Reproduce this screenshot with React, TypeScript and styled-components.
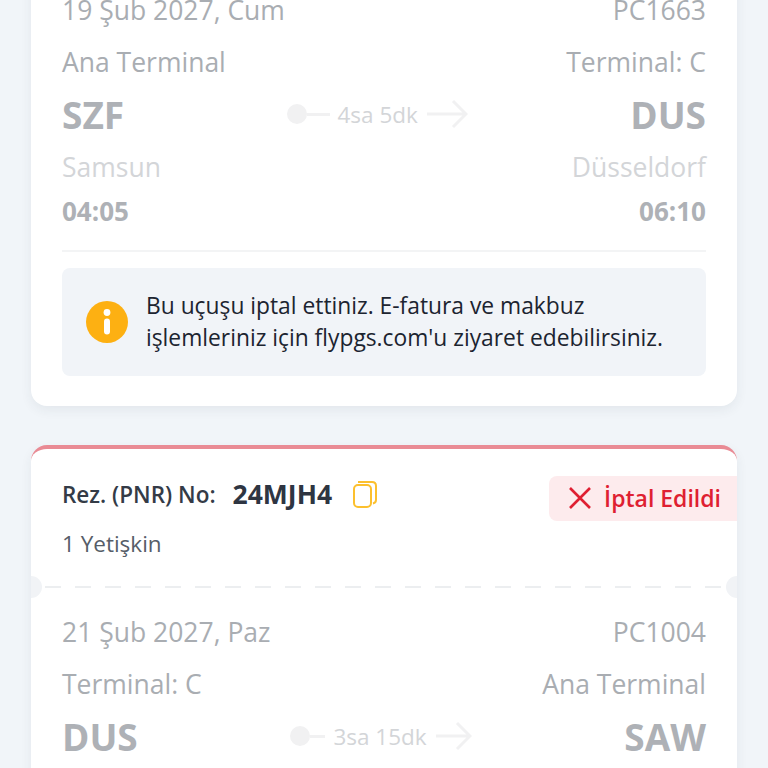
import React from 'react';
import styled, { createGlobalStyle } from 'styled-components';

const GlobalStyle = createGlobalStyle`
  html, body {
    margin: 0;
    padding: 0;
    background: #f1f5f9;
    font-family: 'Open Sans', 'Liberation Sans', sans-serif;
  }
`;

const Page = styled.div`
  width: 768px;
  height: 768px;
  overflow: hidden;
  background: #f1f5f9;
  box-sizing: border-box;
  padding: 0 31px;
`;

const Card = styled.section`
  position: relative;
  background: #fff;
  border-radius: 16px;
  box-shadow: 0 4px 12px rgba(40, 50, 70, 0.07);
`;

const FirstCard = styled(Card)`
  margin-top: -40px;
  padding: 24px 31px 30px;
`;

const CancelledCard = styled(Card)`
  margin-top: 39px;
  border-top: 4px solid #e98a94;
  overflow: hidden;
`;

const Row = styled.div`
  display: flex;
  justify-content: space-between;
  align-items: center;
`;

const MetaRow = styled(Row)`
  height: 52px;
  font-size: 26.5px;
  color: #a9adb2;
`;

const CodeRow = styled(Row)`
  height: 54px;
  margin-top: -1px;
  font-size: 37px;
  font-weight: 700;
  color: #aeb1b6;
`;

const CityRow = styled(Row)`
  height: 52px;
  font-size: 26.5px;
  color: #d3d5d8;
`;

const TimeRow = styled(Row)`
  height: 36px;
  font-size: 26px;
  font-weight: 700;
  color: #aeb1b6;
`;

const Route = styled.div`
  display: flex;
  align-items: center;
  font-size: 22.5px;
  font-weight: 400;
  color: #d3d5d8;
`;

const Dot = styled.span`
  width: 20px;
  height: 20px;
  border-radius: 50%;
  background: #f1f1f2;
`;

const Stem = styled.span<{ $width: number }>`
  width: ${({ $width }) => $width}px;
  height: 3px;
  background: #f1f1f2;
  margin-right: 8px;
`;

const ArrowIcon = styled.svg`
  margin-left: 9px;
  display: block;
`;

const Divider = styled.hr`
  border: 0;
  height: 2px;
  background: #f3f4f5;
  margin: 21px 0 16px;
`;

const Notice = styled.div`
  display: flex;
  align-items: center;
  gap: 18px;
  height: 108px;
  padding: 0 24px;
  background: #f1f4f8;
  border-radius: 8px;
  font-size: 22.8px;
  line-height: 32px;
  color: #1c2430;
`;

const NoticeIcon = styled.svg`
  flex: none;
  display: block;
`;

const NoticeText = styled.p`
  margin: 0;
  white-space: nowrap;
`;

const Header = styled.div`
  display: flex;
  justify-content: space-between;
  align-items: flex-start;
  height: 137px;
  padding: 27px 0 0 31px;
  box-sizing: border-box;
`;

const PnrLine = styled.div`
  display: flex;
  align-items: center;
  height: 36px;
`;

const PnrLabel = styled.span`
  font-size: 22.5px;
  font-weight: 600;
  color: #343b47;
`;

const PnrValue = styled.span`
  margin-left: 17px;
  font-size: 26.5px;
  font-weight: 700;
  color: #2e3542;
`;

const CopyIcon = styled.svg`
  margin-left: 21px;
  display: block;
`;

const Passengers = styled.div`
  margin-top: 16px;
  font-size: 22.5px;
  color: #565d68;
`;

const Badge = styled.div`
  display: flex;
  align-items: center;
  gap: 12px;
  height: 45px;
  box-sizing: border-box;
  padding: 0 16px 2px 19px;
  background: #fdebed;
  border-radius: 8px 0 0 8px;
  font-size: 23px;
  font-weight: 600;
  color: #df1f32;
`;

const Perforation = styled.div`
  position: relative;
  height: 2px;
  margin: 0 14px;
  background: repeating-linear-gradient(90deg, #eceef0 0 16px, transparent 16px 30px);
`;

const Notch = styled.span<{ $side: 'left' | 'right' }>`
  position: absolute;
  top: -10px;
  ${({ $side }) => $side}: -25px;
  width: 22px;
  height: 22px;
  border-radius: 50%;
  background: #f1f3f6;
`;

const SecondBody = styled.div`
  padding: 18px 31px 40px;
`;

interface RouteProps {
  duration: string;
  stem: number;
  arrow: number;
}

const RouteMiddle: React.FC<RouteProps> = ({ duration, stem, arrow }) => (
  <Route>
    <Dot />
    <Stem $width={stem} />
    {duration}
    <ArrowIcon width={arrow} height="32" viewBox={`0 0 ${arrow} 32`} fill="none">
      <path
        d={`M0 16H${arrow - 2}M${arrow - 15} 3L${arrow - 2} 16L${arrow - 15} 29`}
        stroke="#f1f1f2"
        strokeWidth="3"
      />
    </ArrowIcon>
  </Route>
);

const App: React.FC = () => (
  <>
    <GlobalStyle />
    <Page>
      <FirstCard>
        <MetaRow>
          <span>19 Şub 2027, Cum</span>
          <span>PC1663</span>
        </MetaRow>
        <MetaRow>
          <span>Ana Terminal</span>
          <span>Terminal: C</span>
        </MetaRow>
        <CodeRow>
          <span>SZF</span>
          <RouteMiddle duration="4sa 5dk" stem={23} arrow={41} />
          <span>DUS</span>
        </CodeRow>
        <CityRow>
          <span>Samsun</span>
          <span>Düsseldorf</span>
        </CityRow>
        <TimeRow>
          <span>04:05</span>
          <span>06:10</span>
        </TimeRow>
        <Divider />
        <Notice>
          <NoticeIcon width="42" height="42" viewBox="0 0 42 42">
            <circle cx="21" cy="21" r="21" fill="#fdb012" />
            <circle cx="21" cy="11.5" r="3.4" fill="#fff" />
            <rect x="18" y="17.5" width="6" height="16" rx="3" fill="#fff" />
          </NoticeIcon>
          <NoticeText>
            Bu uçuşu iptal ettiniz. E-fatura ve makbuz
            <br />
            işlemleriniz için flypgs.com'u ziyaret edebilirsiniz.
          </NoticeText>
        </Notice>
      </FirstCard>
      <CancelledCard>
        <Header>
          <div>
            <PnrLine>
              <PnrLabel>Rez. (PNR) No:</PnrLabel>
              <PnrValue>24MJH4</PnrValue>
              <CopyIcon width="24" height="27" viewBox="0 0 24 27" fill="none" stroke="#fcc02e" strokeWidth="2">
                <rect x="1" y="4" width="17" height="22" rx="4" />
                <path d="M5 1H19C21.5 1 23 2.5 23 5V19C23 21 22 22 20 22.5" />
              </CopyIcon>
            </PnrLine>
            <Passengers>1 Yetişkin</Passengers>
          </div>
          <Badge>
            <svg width="24" height="24" viewBox="0 0 24 24" fill="none" stroke="#df1f32" strokeWidth="2.6">
              <path d="M2 2L22 22M22 2L2 22" />
            </svg>
            İptal Edildi
          </Badge>
        </Header>
        <Perforation>
          <Notch $side="left" />
          <Notch $side="right" />
        </Perforation>
        <SecondBody>
          <MetaRow>
            <span>21 Şub 2027, Paz</span>
            <span>PC1004</span>
          </MetaRow>
          <MetaRow>
            <span>Terminal: C</span>
            <span>Ana Terminal</span>
          </MetaRow>
          <CodeRow>
            <span>DUS</span>
            <RouteMiddle duration="3sa 15dk" stem={15} arrow={36} />
            <span>SAW</span>
          </CodeRow>
        </SecondBody>
      </CancelledCard>
    </Page>
  </>
);

export default App;
